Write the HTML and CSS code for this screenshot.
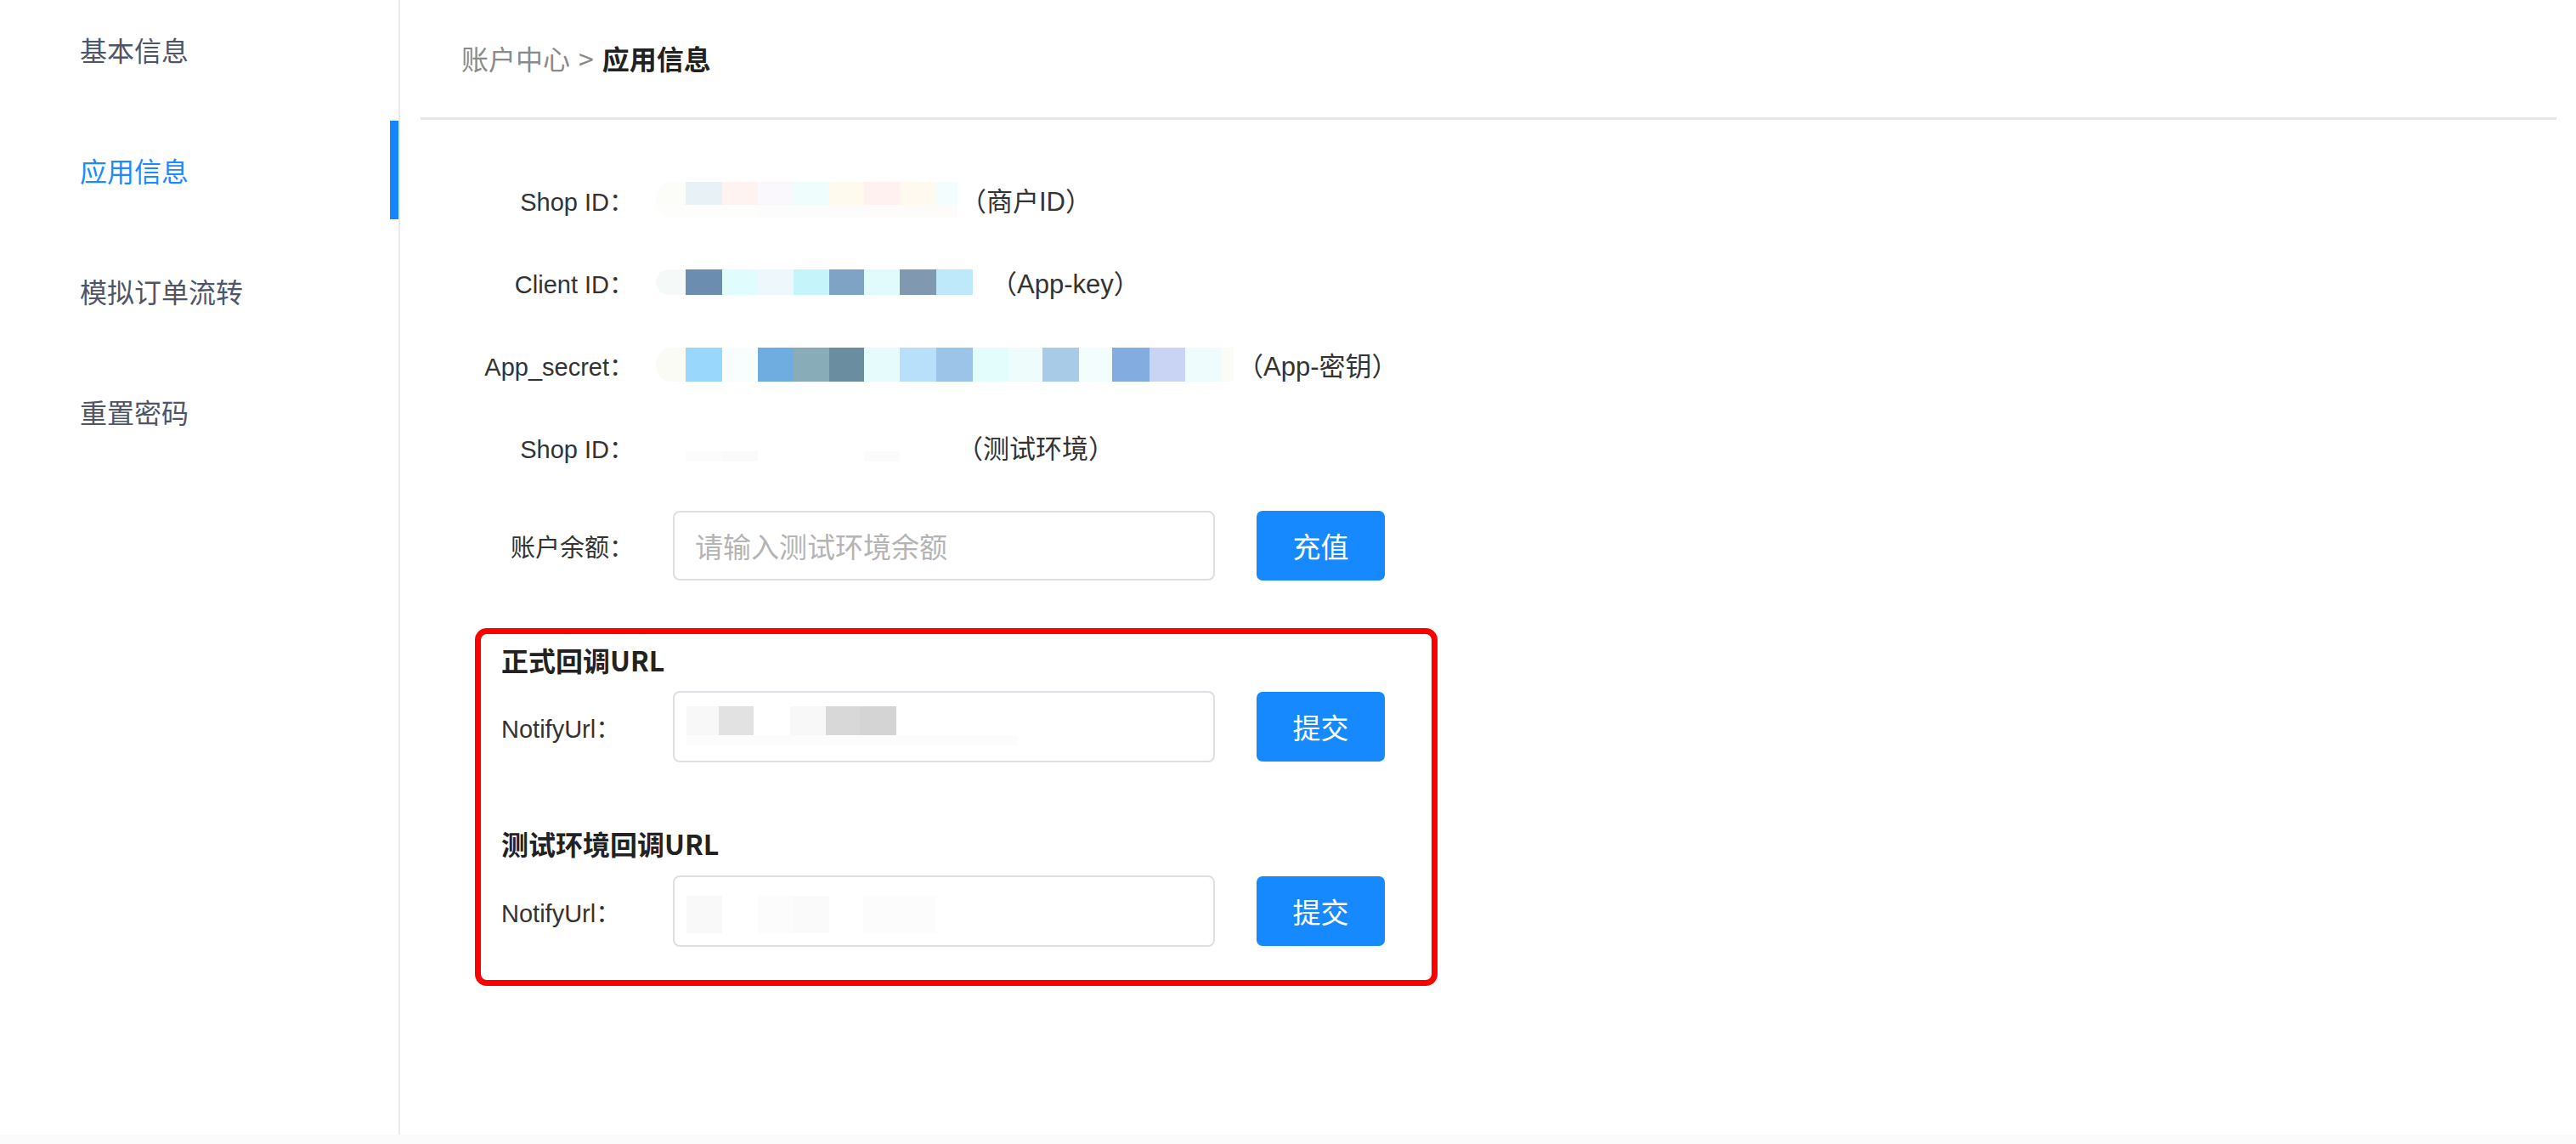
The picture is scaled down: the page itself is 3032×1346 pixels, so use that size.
FILE: index.html
```html
<!DOCTYPE html>
<html lang="zh-CN">
<head>
  <meta charset="UTF-8" />
  <meta name="viewport" content="width=device-width, initial-scale=1.0"/>
  <title>应用信息 - 账户中心</title>
  <link rel="stylesheet" href="styles.css">
</head>
<body>
  <div class="layout">
    <!-- 左侧菜单 -->
    <aside class="sidebar">
      <ul class="menu">
        <li class="menu-item">基本信息</li>
        <li class="menu-item active">应用信息</li>
        <li class="menu-item">模拟订单流转</li>
        <li class="menu-item">重置密码</li>
      </ul>
    </aside>

    <main class="main">
      <div class="header">
        <span class="crumb">账户中心</span>
        <span class="crumb-sep">&gt;</span>
        <span class="crumb-current">应用信息</span>
      </div>

      <div class="form">
        <div class="row info">
          <span class="label">Shop ID：</span>
          <span class="mask mask-shop"></span>
          <span class="note">（商户ID）</span>
        </div>
        <div class="row info">
          <span class="label">Client ID：</span>
          <span class="mask mask-client"></span>
          <span class="note">（App-key）</span>
        </div>
        <div class="row info">
          <span class="label">App_secret：</span>
          <span class="mask mask-secret"></span>
          <span class="note">（App-密钥）</span>
        </div>
        <div class="row info">
          <span class="label">Shop ID：</span>
          <span class="mask mask-test"></span>
          <span class="note">（测试环境）</span>
        </div>

        <div class="row balance">
          <span class="label">账户余额：</span>
          <input class="input" type="text" placeholder="请输入测试环境余额">
          <button class="btn">充值</button>
        </div>

        <!-- 回调地址 -->
        <div class="notify-box">
          <h3 class="box-title">正式回调URL</h3>
          <div class="row notify-row">
            <span class="notify-label">NotifyUrl：</span>
            <div class="input input-filled"><span class="mask mask-url"></span></div>
            <button class="btn">提交</button>
          </div>

          <h3 class="box-title second">测试环境回调URL</h3>
          <div class="row notify-row">
            <span class="notify-label">NotifyUrl：</span>
            <div class="input input-filled"><span class="mask mask-url-test"></span></div>
            <button class="btn">提交</button>
          </div>
        </div>
      </div>
    </main>
  </div>
</body>
</html>
```

FILE: styles.css
```css
* {
  box-sizing: border-box;
}
html, body {
  margin: 0;
}
body {
  background: #fbfbfb;
  font-family: "Liberation Sans", "Noto Sans CJK SC", sans-serif;
  color: #333;
}
.layout {
  display: flex;
  height: 1335px;
  background: #fff;
}

/* Menu lateral */
.sidebar {
  width: 471px;
  flex-shrink: 0;
  border-right: 2px solid #e8eaef;
}
.menu {
  list-style: none;
  margin: 0;
  padding: 0;
}
.menu-item {
  height: 116px;
  margin-bottom: 26px;
  display: flex;
  align-items: center;
  padding-left: 94px;
  font-family: "Noto Sans CJK SC", sans-serif;
  font-size: 32px;
  color: #4e5569;
}
.menu-item.active {
  color: #1a8cff;
  box-shadow: inset -10px 0 0 #1485ff;
}

/* Contenido */
.main {
  flex: 1;
}
.header {
  height: 141px;
  margin: 0 23px 0 24px;
  padding-left: 48px;
  padding-bottom: 2px;
  border-bottom: 3px solid #e5e7eb;
  display: flex;
  align-items: center;
  font-family: "Noto Sans CJK SC", sans-serif;
  font-size: 32px;
}
.crumb,
.crumb-sep {
  color: #8a8a8a;
}
.crumb-sep {
  margin: 0 10px;
}
.crumb-current {
  color: #222;
  font-weight: bold;
}

.form {
  padding: 45px 0 0 88px;
}
.row {
  display: flex;
  align-items: center;
}
.info {
  height: 97px;
}
.label {
  width: 187px;
  flex-shrink: 0;
  text-align: right;
  font-size: 29px;
  color: #333;
}
.note {
  font-size: 31px;
  color: #333;
}

/* Datos ocultos (pixelado) */
.mask {
  display: block;
  flex-shrink: 0;
  margin-left: 26px;
  border-radius: 18px 0 0 18px;
}
.mask-shop {
  width: 358px;
  height: 42px;
  background:
    linear-gradient(90deg, #fcfcf9 0 35px, #e8f1f5 35px 78px, #fff3f1 78px 120px, #fbf8fd 120px 162px,
      #f0fdfd 162px 204px, #fff9ee 204px 245px, #fff1f0 245px 287px, #fff9f0 287px 330px, #f3fdfd 330px 355px, #fff 355px) top / 100% 27px no-repeat,
    linear-gradient(90deg, #fdfdfb 0 120px, #fdfcfd 120px 245px, #fefcfb 245px 355px, #fff 355px) bottom / 100% 15px no-repeat;
}
.mask-client {
  width: 394px;
  height: 30px;
  background: linear-gradient(90deg, #f5f9f8 0 35px, #6b8db0 35px 78px, #e0fcfd 78px 120px, #eef8fc 120px 162px,
    #c5f5fb 162px 204px, #7fa3c4 204px 245px, #e1fbfd 245px 287px, #8199b0 287px 330px, #bde9fb 330px 373px, #fff 373px);
}
.mask-secret {
  width: 684px;
  height: 40px;
  background: linear-gradient(90deg, #fbfbf6 0 35px, #9ad7fc 35px 78px, #f8fdfd 78px 120px, #6fade1 120px 162px,
    #88adb9 162px 204px, #6a8e9f 204px 245px, #e6fbfc 245px 287px, #b8e0fb 287px 330px, #9bc4e8 330px 373px,
    #e3fdfd 373px 415px, #effcfc 415px 455px, #a8cbe8 455px 498px, #f4fdfd 498px 537px, #83ade1 537px 581px,
    #c9d3f3 581px 623px, #effcfe 623px 665px, #fcfcf7 665px 680px, #fff 680px);
}
.mask-test {
  width: 354px;
  height: 12px;
  margin-top: 22px;
  background: linear-gradient(90deg, #fff 0 35px, #fcfcfc 35px 78px, #fafafa 78px 120px, #fff 120px 245px, #fbfbfb 245px 287px, #fff 287px);
}

.balance {
  height: 82px;
  margin-top: 27px;
}
.input {
  width: 638px;
  height: 82px;
  flex-shrink: 0;
  margin-left: 46px;
  padding: 0 24px;
  border: 2px solid #dcdfe6;
  border-radius: 8px;
  font-family: "Noto Sans CJK SC", sans-serif;
  font-size: 33px;
  color: #333;
  outline: none;
}
.input::placeholder {
  color: #b4b4b4;
}
.btn {
  width: 151px;
  height: 82px;
  flex-shrink: 0;
  margin-left: 49px;
  border: none;
  border-radius: 7px;
  background: #1689ff;
  color: #fff;
  font-family: "Noto Sans CJK SC", sans-serif;
  font-size: 33px;
  cursor: pointer;
}

/* Caja roja de callbacks */
.notify-box {
  width: 1133px;
  margin-top: 56px;
  padding: 10px 0 39px 24px;
  border: 7px solid #fe0000;
  border-radius: 14px;
}
.box-title {
  margin: 0;
  font-family: "Noto Sans CJK SC", sans-serif;
  font-size: 32px;
  line-height: 40px;
  font-weight: bold;
  color: #222;
}
.box-title.second {
  margin-top: 75px;
}
.notify-row {
  height: 84px;
  margin-top: 17px;
}
.box-title.second + .notify-row {
  margin-top: 18px;
}
.notify-label {
  width: 202px;
  flex-shrink: 0;
  font-size: 29px;
  color: #333;
}
.input-filled {
  height: 84px;
  margin-left: 0;
  padding: 0 14px;
  display: flex;
  align-items: center;
}
.input-filled .mask {
  margin-left: 0;
  border-radius: 0;
}
.mask-url {
  width: 390px;
  height: 46px;
  margin-bottom: 2px;
  background:
    linear-gradient(90deg, #f8f8f8 0 38px, #e2e2e2 38px 79px, #fff 79px 122px, #f8f8f8 122px 164px,
      #d8d8d8 164px 204px, #d4d4d4 204px 247px, #fff 247px) top / 100% 34px no-repeat,
    linear-gradient(90deg, #fcfcfc 0 390px) bottom / 100% 12px no-repeat;
}
.mask-url-test {
  width: 300px;
  height: 44px;
  margin-top: 8px;
  background: linear-gradient(90deg, #f9f9f9 0 42px, #fff 42px 84px, #fcfcfc 84px 126px, #fafafa 126px 168px,
    #fff 168px 208px, #fcfcfc 208px 294px, #fff 294px);
}
```
